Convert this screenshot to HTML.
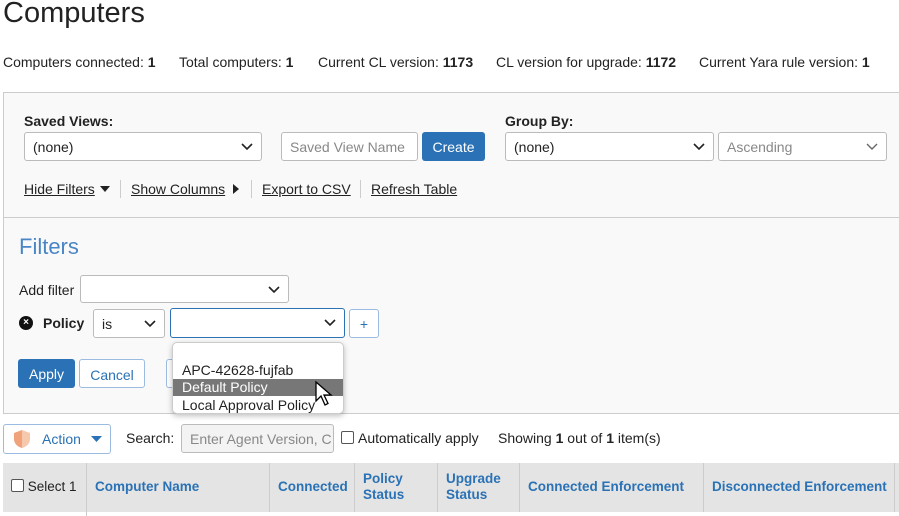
<!DOCTYPE html>
<html><head><style>
*{box-sizing:border-box;margin:0;padding:0}
body{width:899px;height:516px;overflow:hidden;background:#fff;font-family:"Liberation Sans",sans-serif;font-size:14px;color:#222;position:relative}
.a{position:absolute;white-space:nowrap}
.sel{position:absolute;background:#fff;border:1px solid #bbb;border-radius:3px;height:29px;padding:6px 8px;font-size:14px;white-space:nowrap;overflow:hidden}
.sel svg{position:absolute;right:8px;top:10px}
.btn{position:absolute;border-radius:3px;font-size:14px;text-align:center}
.u{text-decoration:underline}
.th{position:absolute;top:463px;height:49px;border-right:1px solid #ccc;color:#2a72b5;font-weight:bold;font-size:13.5px;padding:8px;white-space:nowrap}
</style></head><body>
<div class="a" style="left:3px;top:-3px;font-size:29px;font-weight:300;color:#222">Computers</div>
<div class="a" style="left:3px;top:54px">Computers connected: <b>1</b></div>
<div class="a" style="left:179px;top:54px">Total computers: <b>1</b></div>
<div class="a" style="left:318px;top:54px">Current CL version: <b>1173</b></div>
<div class="a" style="left:496px;top:54px">CL version for upgrade: <b>1172</b></div>
<div class="a" style="left:699px;top:54px">Current Yara rule version: <b>1</b></div>

<div class="a" style="left:3px;top:92px;width:900px;height:322px;border:1px solid #ccc;background:#f9f9f9"></div>
<div class="a" style="left:3px;top:217px;width:900px;height:1px;background:#ccc"></div>

<div class="a" style="left:24px;top:113px;font-weight:bold">Saved Views:</div>
<div class="sel" style="left:24px;top:132px;width:238px">(none)<svg width="12" height="8"><path d="M1 1l5 5 5-5" stroke="#222" stroke-width="1.6" fill="none"/></svg></div>
<div class="sel" style="left:281px;top:132px;width:137px;color:#888">Saved View Name</div>
<div class="btn" style="left:422px;top:132px;width:63px;height:29px;background:#2a72b5;color:#fff;padding-top:7px">Create</div>
<div class="a" style="left:505px;top:113px;font-weight:bold">Group By:</div>
<div class="sel" style="left:505px;top:132px;width:209px">(none)<svg width="12" height="8"><path d="M1 1l5 5 5-5" stroke="#222" stroke-width="1.6" fill="none"/></svg></div>
<div class="sel" style="left:718px;top:132px;width:169px;color:#888">Ascending<svg width="12" height="8"><path d="M1 1l5 5 5-5" stroke="#666" stroke-width="1.4" fill="none"/></svg></div>

<div class="a u" style="left:24px;top:181px">Hide Filters</div>
<svg class="a" style="left:100px;top:186px" width="10" height="6"><path d="M0 0h10L5 6z" fill="#222"/></svg>
<div class="a" style="left:120px;top:180px;width:1px;height:18px;background:#ccc"></div>
<div class="a u" style="left:131px;top:181px">Show Columns</div>
<svg class="a" style="left:233px;top:184px" width="6" height="10"><path d="M0 0v10l6-5z" fill="#222"/></svg>
<div class="a" style="left:251px;top:180px;width:1px;height:18px;background:#ccc"></div>
<div class="a u" style="left:262px;top:181px">Export to CSV</div>
<div class="a" style="left:360px;top:180px;width:1px;height:18px;background:#ccc"></div>
<div class="a u" style="left:371px;top:181px">Refresh Table</div>

<div class="a" style="left:19px;top:234px;font-size:22px;font-weight:300;color:#4a86c5">Filters</div>
<div class="a" style="left:19px;top:282px">Add filter</div>
<div class="sel" style="left:80px;top:275px;width:209px;height:28px"><svg width="12" height="8"><path d="M1 1l5 5 5-5" stroke="#222" stroke-width="1.6" fill="none"/></svg></div>
<div class="a" style="left:19px;top:316px;width:14px;height:14px;border-radius:50%;background:#111;color:#fff;font-size:10px;text-align:center;line-height:14px;font-weight:bold">×</div>
<div class="a" style="left:43px;top:315px;font-weight:bold">Policy</div>
<div class="sel" style="left:93px;top:309px;width:72px">is<svg width="12" height="8"><path d="M1 1l5 5 5-5" stroke="#222" stroke-width="1.6" fill="none"/></svg></div>
<div class="sel" style="left:170px;top:308px;width:175px;height:30px;border:1.5px solid #2a72b5"><svg width="12" height="8"><path d="M1 1l5 5 5-5" stroke="#222" stroke-width="1.6" fill="none"/></svg></div>
<div class="btn" style="left:349px;top:309px;width:30px;height:29px;border:1px solid #9bbbe0;background:#fff;color:#2a72b5;padding-top:6px">+</div>

<div class="btn" style="left:18px;top:359px;width:57px;height:29px;background:#2a72b5;color:#fff;padding-top:7px">Apply</div>
<div class="btn" style="left:79px;top:359px;width:66px;height:29px;border:1px solid #9bbbe0;background:#fff;color:#2a72b5;padding-top:7px">Cancel</div>
<div class="a" style="left:166px;top:359px;width:10px;height:29px;border:1px solid #9bbbe0;border-right:none;border-radius:3px 0 0 3px;background:#fff"></div>

<div class="a" style="left:172px;top:342px;width:172px;height:72px;background:#fff;border:1px solid #ccc;border-radius:5px;box-shadow:0 2px 6px rgba(0,0,0,.25)"></div>
<div class="a" style="left:182px;top:362px">APC-42628-fujfab</div>
<div class="a" style="left:173px;top:379px;width:170px;height:17px;background:#777"></div>
<div class="a" style="left:182px;top:379px;color:#fff">Default Policy</div>
<div class="a" style="left:182px;top:397px">Local Approval Policy</div>
<svg class="a" style="left:314px;top:380px" width="20" height="28"><path d="M2 2v19l5-5 4 9 3-1.5-4-8.5h7z" fill="#fff" stroke="#000" stroke-width="1.3"/></svg>

<div class="btn" style="left:3px;top:424px;width:108px;height:30px;border:1px solid #9bbbe0;background:#fff"></div>
<svg class="a" style="left:12px;top:429px" width="20" height="20"><path d="M10 1L2 4v6c0 5 4 8 8 9z" fill="#f0a27a"/><path d="M10 1l8 3v6c0 5-4 8-8 9z" fill="#f6c9ad"/></svg>
<div class="a" style="left:42px;top:431px;color:#2a72b5">Action</div>
<svg class="a" style="left:91px;top:436px" width="11" height="6"><path d="M0 0h11L5.5 6z" fill="#2a72b5"/></svg>
<div class="a" style="left:126px;top:430px">Search:</div>
<div class="sel" style="left:181px;top:424px;width:153px;height:29px;background:#f3f3f3;color:#888">Enter Agent Version, C</div>
<div class="a" style="left:341px;top:431px;width:13px;height:13px;border:1px solid #555;border-radius:2px;background:#fff"></div>
<div class="a" style="left:358px;top:430px">Automatically apply</div>
<div class="a" style="left:498px;top:430px">Showing <b>1</b> out of <b>1</b> item(s)</div>

<div class="a" style="left:3px;top:463px;width:896px;height:49px;background:#e4e4e4"></div>
<div class="th" style="left:3px;width:84px;color:#222;font-weight:normal;padding-top:16px"><span style="display:inline-block;width:13px;height:13px;border:1px solid #555;border-radius:2px;background:#fff;vertical-align:-1px"></span> Select 1</div>
<div class="th" style="left:87px;width:183px;padding-top:16px">Computer Name</div>
<div class="th" style="left:270px;width:85px;padding-top:16px">Connected</div>
<div class="th" style="left:355px;width:83px;line-height:16px">Policy<br>Status</div>
<div class="th" style="left:438px;width:82px;line-height:16px">Upgrade<br>Status</div>
<div class="th" style="left:520px;width:184px;padding-top:16px">Connected Enforcement</div>
<div class="th" style="left:704px;width:191px;padding-top:16px">Disconnected Enforcement</div>
<div class="a" style="left:86px;top:512px;width:1px;height:4px;background:#ccc"></div>
</body></html>
